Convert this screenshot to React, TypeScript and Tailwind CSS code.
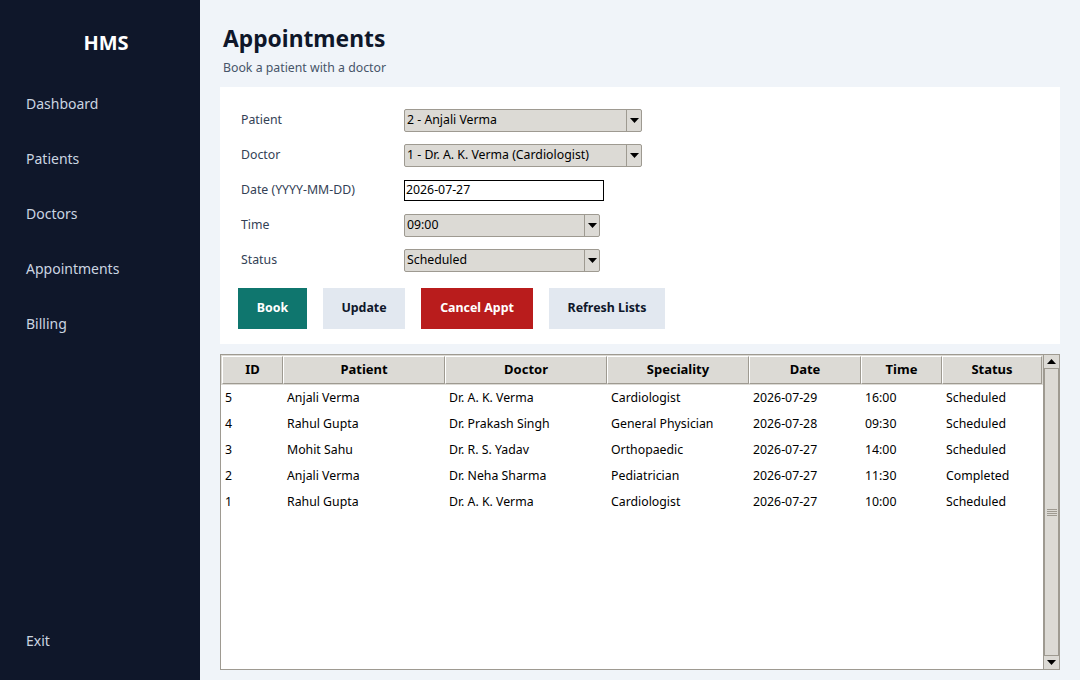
interface Appt {
  id: number
  patient: string
  doctor: string
  speciality: string
  date: string
  time: string
  status: string
}

const ROWS: Appt[] = [
  { id: 5, patient: 'Anjali Verma', doctor: 'Dr. A. K. Verma', speciality: 'Cardiologist', date: '2026-07-29', time: '16:00', status: 'Scheduled' },
  { id: 4, patient: 'Rahul Gupta', doctor: 'Dr. Prakash Singh', speciality: 'General Physician', date: '2026-07-28', time: '09:30', status: 'Scheduled' },
  { id: 3, patient: 'Mohit Sahu', doctor: 'Dr. R. S. Yadav', speciality: 'Orthopaedic', date: '2026-07-27', time: '14:00', status: 'Scheduled' },
  { id: 2, patient: 'Anjali Verma', doctor: 'Dr. Neha Sharma', speciality: 'Pediatrician', date: '2026-07-27', time: '11:30', status: 'Completed' },
  { id: 1, patient: 'Rahul Gupta', doctor: 'Dr. A. K. Verma', speciality: 'Cardiologist', date: '2026-07-27', time: '10:00', status: 'Scheduled' },
]

const NAV = ['Dashboard', 'Patients', 'Doctors', 'Appointments', 'Billing']

const COLS = [
  { label: 'ID', w: 'w-[61px]' },
  { label: 'Patient', w: 'w-[162px]' },
  { label: 'Doctor', w: 'w-[162px]' },
  { label: 'Speciality', w: 'w-[142px]' },
  { label: 'Date', w: 'w-[112px]' },
  { label: 'Time', w: 'w-[81px]' },
  { label: 'Status', w: 'flex-1' },
]

function Arrow({ up }: { up?: boolean }) {
  return (
    <svg width="9" height="5" viewBox="0 0 9 5">
      {up ? <path d="M0 5 L4.5 0 L9 5 Z" fill="#000" /> : <path d="M0 0 L9 0 L4.5 5 Z" fill="#000" />}
    </svg>
  )
}

function Combo({ value, w }: { value: string; w: string }) {
  return (
    <div className={`flex h-[23px] ${w} items-stretch rounded-[2px] border border-[#9e9a91] bg-[#dcdad5]`}>
      <div className="flex flex-1 items-center px-[2px] text-[12.3px] text-black">{value}</div>
      <div className="flex w-[15px] items-center justify-center border-l border-[#9e9a91]">
        <Arrow />
      </div>
    </div>
  )
}

function Field({ label, children }: { label: string; children: React.ReactNode }) {
  return (
    <div className="flex h-[35px] items-center">
      <div className="w-[163px] text-[12.3px] text-[#334155]">{label}</div>
      {children}
    </div>
  )
}

export default function App() {
  return (
    <div className="flex h-[680px] w-[1080px] font-['Noto_Sans',sans-serif]">
      {/* Sidebar */}
      <aside className="flex w-[200px] flex-col bg-[#0f172a] px-[26px]">
        <div className="pt-[28px] pl-[12px] text-center text-[20px] font-bold text-white">HMS</div>
        <nav className="mt-[18px] flex flex-col">
          {NAV.map((n) => (
            <div key={n} className="flex h-[55px] items-center text-[14px] text-[#cbd5e1]">
              {n}
            </div>
          ))}
        </nav>
        <div className="mt-auto mb-[29px] text-[14px] text-[#cbd5e1]">Exit</div>
      </aside>

      {/* Main */}
      <main className="flex flex-1 flex-col bg-[#f0f4f9] px-[20px]">
        <h1 className="mt-[22px] pl-[3px] text-[22.8px] font-bold leading-[34px] text-[#0f172a]">Appointments</h1>
        <p className="mt-[2px] pl-[3px] text-[12.3px] leading-[20px] text-[#475569]">Book a patient with a doctor</p>

        <div className="mt-[9px] bg-white pl-[21px] pt-[16px] pb-[15px]">
          <Field label="Patient">
            <Combo value="2 - Anjali Verma" w="w-[238px]" />
          </Field>
          <Field label="Doctor">
            <Combo value="1 - Dr. A. K. Verma (Cardiologist)" w="w-[238px]" />
          </Field>
          <Field label="Date (YYYY-MM-DD)">
            <div className="flex h-[21px] w-[200px] items-center border border-black px-[1px] text-[12.3px] text-black">
              2026-07-27
            </div>
          </Field>
          <Field label="Time">
            <Combo value="09:00" w="w-[196px]" />
          </Field>
          <Field label="Status">
            <Combo value="Scheduled" w="w-[196px]" />
          </Field>
          <div className="mt-[10px] -ml-[3px] flex gap-[16px]">
            <button className="h-[41px] w-[69px] bg-[#0f766e] text-[12.4px] font-bold text-white">Book</button>
            <button className="h-[41px] w-[82px] bg-[#e2e8f0] text-[12.4px] font-bold text-[#0f172a]">Update</button>
            <button className="h-[41px] w-[112px] bg-[#b91c1c] text-[12.4px] font-bold text-white">Cancel Appt</button>
            <button className="h-[41px] w-[116px] bg-[#e2e8f0] text-[12.4px] font-bold text-[#0f172a]">Refresh Lists</button>
          </div>
        </div>

        {/* Table */}
        <div className="mt-[10px] mb-[10px] flex flex-1 border border-[#9e9a91] bg-white">
          <div className="flex flex-1 flex-col">
            <div className="flex h-[30px] bg-[#dcdad5] p-px">
              {COLS.map((c) => (
                <div
                  key={c.label}
                  className={`${c.w} flex items-center justify-center border border-[#9e9a91] border-t-white border-l-white text-[13px] font-bold text-black`}
                >
                  {c.label}
                </div>
              ))}
            </div>
            {ROWS.map((r) => (
              <div key={r.id} className="flex h-[26px] items-center text-[12.3px] text-black">
                <div className="w-[62px] pl-[4px]">{r.id}</div>
                <div className="w-[162px] pl-[4px]">{r.patient}</div>
                <div className="w-[162px] pl-[4px]">{r.doctor}</div>
                <div className="w-[142px] pl-[4px]">{r.speciality}</div>
                <div className="w-[112px] pl-[4px]">{r.date}</div>
                <div className="w-[81px] pl-[4px]">{r.time}</div>
                <div className="flex-1 pl-[4px]">{r.status}</div>
              </div>
            ))}
          </div>
          {/* Scrollbar */}
          <div className="flex w-[16px] flex-col border-l border-[#9e9a91] bg-[#dcdad5]">
            <div className="flex h-[14px] items-center justify-center border-b border-[#9e9a91]">
              <Arrow up />
            </div>
            <div className="flex flex-1 flex-col items-center justify-center gap-[1px] border-x border-[#9e9a91]">
              {[0, 1, 2, 3].map((i) => (
                <div key={i} className="h-px w-[10px] bg-[#9e9a91]" />
              ))}
            </div>
            <div className="flex h-[14px] items-center justify-center border-t border-[#9e9a91]">
              <Arrow />
            </div>
          </div>
        </div>
      </main>
    </div>
  )
}
